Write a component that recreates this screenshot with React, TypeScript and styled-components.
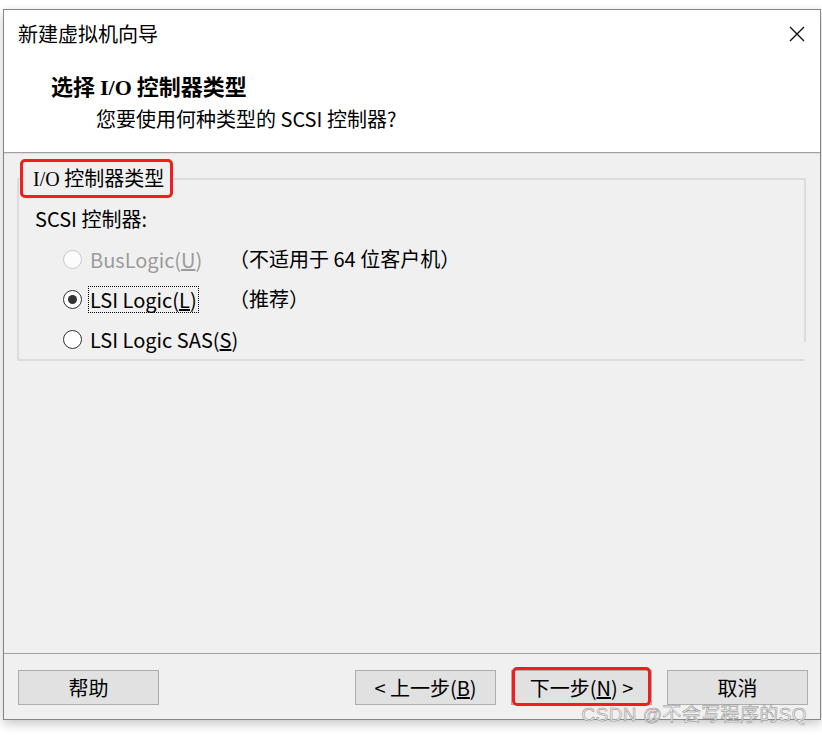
import React from "react";
import styled, { createGlobalStyle } from "styled-components";

const Global = createGlobalStyle`
  html, body { margin: 0; padding: 0; background: #ffffff; }
  body {
    font-family: "Noto Sans CJK SC", "Microsoft YaHei", sans-serif;
    color: #000;
  }
  #root { width: 822px; height: 737px; overflow: hidden; }
`;

const Page = styled.div`
  position: relative;
  box-sizing: border-box;
  height: 737px;
  padding: 9px 0 0 3px;
`;

const Window = styled.div`
  box-sizing: border-box;
  width: 818px;
  height: 711px;
  border: 1px solid #858585;
  background: #f0f0f0;
  display: flex;
  flex-direction: column;
  box-shadow: 0 4px 10px rgba(0, 0, 0, 0.22);
`;

const TitleBar = styled.div`
  height: 48px;
  flex: none;
  background: #ffffff;
  display: flex;
  align-items: center;
  justify-content: space-between;
  padding: 0 15px 0 14px;
  font-size: 20px;
  line-height: 24px;
`;

const CloseButton = styled.div`
  width: 16px;
  height: 16px;
  display: flex;
`;

const Header = styled.div`
  flex: none;
  box-sizing: border-box;
  height: 95px;
  background: #ffffff;
  border-bottom: 1px solid #a0a0a0;
  padding: 14px 0 0 47px;
`;

const HeaderTitle = styled.div`
  font-size: 22px;
  font-weight: 700;
  line-height: 26px;
`;

const Serif = styled.span`
  font-family: "Liberation Serif", "Noto Sans CJK SC", serif;
`;

const HeaderSub = styled.div`
  font-size: 20px;
  line-height: 26px;
  margin-top: 5px;
  padding-left: 45px;
`;

const Body = styled.div`
  flex: 1;
  padding: 6px 14px 0 13px;
  box-shadow: inset 0 1px 0 #dedede;
`;

const Group = styled.fieldset`
  position: relative;
  margin: 0;
  padding: 0;
  border: 2px solid #dcdcdc;
  min-width: 0;

  &::after {
    content: "";
    position: absolute;
    right: -2px;
    top: 144px;
    width: 2px;
    height: 24px;
    background: #f0f0f0;
  }
`;

const Legend = styled.legend`
  margin-left: 1px;
  padding: 0 6px 0 10px;
  border: 3px solid #f41c1c;
  border-radius: 5px;
  font-size: 20px;
  line-height: 32px;
`;

const FieldLabel = styled.div`
  font-size: 20px;
  line-height: 28px;
  margin-top: 7px;
  padding-left: 16px;
`;

const Options = styled.div`
  margin-top: 6px;
  padding-left: 44px;
`;

const Row = styled.div`
  display: grid;
  grid-template-columns: 166px auto;
  align-items: center;
  height: 40px;
`;

const RadioLabel = styled.div<{ $disabled?: boolean }>`
  display: flex;
  align-items: center;
  gap: 7px;
  font-size: 20px;
  white-space: nowrap;
  color: ${(p) => (p.$disabled ? "#9b9b9b" : "#000")};
`;

const Circle = styled.span<{ $disabled?: boolean }>`
  box-sizing: border-box;
  width: 19px;
  height: 19px;
  border-radius: 50%;
  border: 1px solid ${(p) => (p.$disabled ? "#c9c9c9" : "#333333")};
  background: ${(p) => (p.$disabled ? "#fcfcfc" : "#ffffff")};
  display: flex;
  align-items: center;
  justify-content: center;
  flex: none;
`;

const Dot = styled.span`
  width: 9px;
  height: 9px;
  border-radius: 50%;
  background: #333333;
`;

const Text = styled.span<{ $focused?: boolean }>`
  line-height: 25px;
  padding: 0 1px;
  outline: ${(p) => (p.$focused ? "1px dotted #000" : "none")};
`;

const Note = styled.span`
  font-size: 20px;
  line-height: 26px;
  white-space: nowrap;
`;

const Footer = styled.div`
  flex: none;
  border-top: 1px solid #a0a0a0;
  padding: 16px 12px 14px 14px;
  display: flex;
  gap: 15px;
`;

const Spacer = styled.div`
  flex: 1;
`;

const Button = styled.button<{ $marked?: boolean }>`
  position: relative;
  box-sizing: border-box;
  width: 141px;
  height: 35px;
  padding: 0;
  border: 1px solid #adadad;
  background: #e1e1e1;
  font-family: inherit;
  font-size: 20px;
  color: #000;
  line-height: 33px;

  &::after {
    content: "";
    display: ${(p) => (p.$marked ? "block" : "none")};
    position: absolute;
    left: 0;
    right: 0;
    top: -4px;
    bottom: -2px;
    border: 3px solid #f41c1c;
    border-radius: 5px;
  }
`;

const Watermark = styled.div`
  position: absolute;
  right: 15px;
  top: 704px;
  font-family: "Liberation Sans", "Noto Sans CJK SC", sans-serif;
  font-size: 19px;
  line-height: 22px;
  letter-spacing: 0.4px;
  color: #f2f2f2;
  -webkit-text-stroke: 0.5px #8a8a8a;
  white-space: nowrap;
`;

export default function App() {
  return (
    <>
      <Global />
      <Page>
        <Window>
          <TitleBar>
            <span>新建虚拟机向导</span>
            <CloseButton>
              <svg width="16" height="16" viewBox="0 0 16 16">
                <path d="M1 1 L15 15 M15 1 L1 15" stroke="#111" strokeWidth="1.4" fill="none" />
              </svg>
            </CloseButton>
          </TitleBar>
          <Header>
            <HeaderTitle>
              选择 <Serif>I/O</Serif> 控制器类型
            </HeaderTitle>
            <HeaderSub>您要使用何种类型的 SCSI 控制器?</HeaderSub>
          </Header>
          <Body>
            <Group>
              <Legend>
                <Serif>I/O</Serif> 控制器类型
              </Legend>
              <FieldLabel>SCSI 控制器:</FieldLabel>
              <Options>
                <Row>
                  <RadioLabel $disabled>
                    <Circle $disabled />
                    <Text>
                      BusLogic(<u>U</u>)
                    </Text>
                  </RadioLabel>
                  <Note>（不适用于 64 位客户机）</Note>
                </Row>
                <Row>
                  <RadioLabel>
                    <Circle>
                      <Dot />
                    </Circle>
                    <Text $focused>
                      LSI Logic(<u>L</u>)
                    </Text>
                  </RadioLabel>
                  <Note>（推荐）</Note>
                </Row>
                <Row>
                  <RadioLabel>
                    <Circle />
                    <Text>
                      LSI Logic SAS(<u>S</u>)
                    </Text>
                  </RadioLabel>
                </Row>
              </Options>
            </Group>
          </Body>
          <Footer>
            <Button>帮助</Button>
            <Spacer />
            <Button>
              &lt; 上一步(<u>B</u>)
            </Button>
            <Button $marked>
              下一步(<u>N</u>) &gt;
            </Button>
            <Button>取消</Button>
          </Footer>
        </Window>
        <Watermark>CSDN @不会写程序的SQ</Watermark>
      </Page>
    </>
  );
}
